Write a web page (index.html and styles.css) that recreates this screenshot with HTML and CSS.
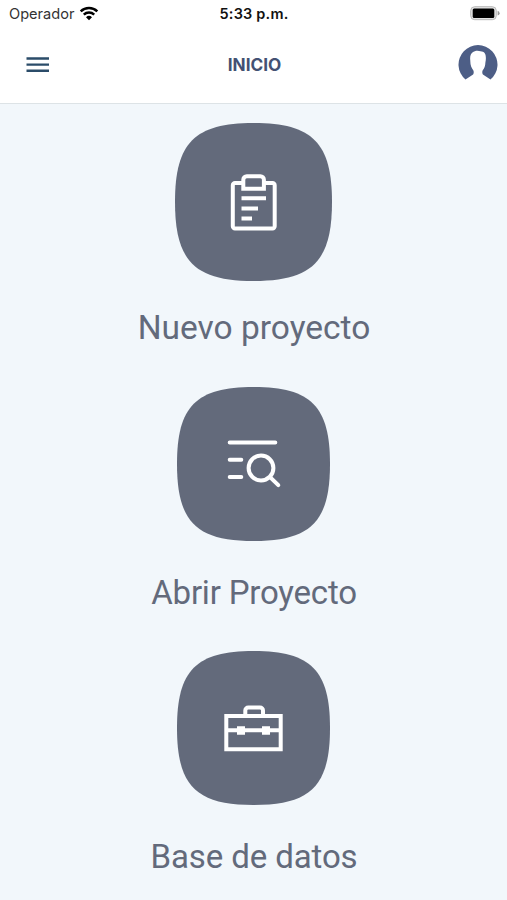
FILE: index.html
```html
<!DOCTYPE html>
<html lang="es">
<head>
  <meta charset="UTF-8">
  <meta name="viewport" content="width=device-width, initial-scale=1.0">
  <title>Inicio</title>
  <link rel="stylesheet" href="styles.css">
</head>
<body>
  <header>
    <div class="status-bar">
      <div class="carrier">
        <span class="carrier-name">Operador</span>
        <svg class="wifi" width="20" height="15" viewBox="0 0 20 15">
          <path d="M1.7 5.3a12 12 0 0 1 16.6 0M4.8 8.6a7.6 7.6 0 0 1 10.4 0" fill="none" stroke="#000" stroke-width="2.5"/>
          <path d="M7 11.2a4.4 4.4 0 0 1 6 0L10 14.3z"/>
        </svg>
      </div>
      <span class="time">5:33 p.m.</span>
      <svg class="battery" width="32" height="16" viewBox="0 0 32 16">
        <rect x="1.7" y="0.7" width="25.6" height="13" rx="4" fill="#e4e4e4" stroke="#b8b8b8" stroke-width="1"/>
        <rect x="3.7" y="2.6" width="21.6" height="9.4" rx="1.5"/>
        <path d="M28.6 4.8q2 .8 2 2.4t-2 2.4z" fill="#999"/>
      </svg>
    </div>
    <nav class="navbar">
      <svg class="menu" width="24" height="18" viewBox="0 0 24 18">
        <path d="M.5 2.5h22.5M.5 8.6h22.5M.5 14.7h22.5" stroke="#2b4c69" stroke-width="2.4"/>
      </svg>
      <h1>INICIO</h1>
      <svg class="avatar" width="40" height="36" viewBox="0 0 40 36">
        <path d="M7.5 34.5A19.5 19.5 0 1 1 32.5 34.5L24.9 29.6Q23.8 27.8 24.6 25.5C26.5 23 27.2 21 27.4 17.5C28.7 10.5 27.5 6.5 22.5 6.3C18 4.8 11 6.5 12.3 15.5C12.2 20 13.5 23 15.4 25.5Q16.2 27.8 15.1 29.6Z" fill="#4d5e86"/>
      </svg>
    </nav>
  </header>

  <main>
    <a class="option">
      <svg class="tile tile-big" viewBox="0 0 157 158">
        <path class="shape" d="M78.5 0C137.4 0 157 19.8 157 79S137.400 158 78.500 158S0 138.200 0 79S19.600 0 78.500 0Z"/>
        <g class="lines">
          <path d="M67.500 60H60a2.200 2.200 0 0 0-2.200 2.200V103.300a2.200 2.200 0 0 0 2.200 2.200H97.500a2.200 2.200 0 0 0 2.200-2.200V62.200a2.200 2.200 0 0 0-2.200-2.200H90"/>
          <path d="M68.300 65.800V56.700a3.500 3.500 0 0 1 3.500-3.500H85.400a3.500 3.500 0 0 1 3.500 3.500V65.800Z"/>
          <path d="M66.500 75.300H91M66.500 85.500H83M66.500 95.600H77"/>
        </g>
      </svg>
      <span class="label label-new">Nuevo proyecto</span>
    </a>

    <a class="option">
      <svg class="tile" viewBox="0 0 153 154">
        <path class="shape" d="M76.500 0C133.900 0 153 19.300 153 77S133.900 154 76.500 154S0 134.700 0 77S19.100 0 76.500 0Z"/>
        <g class="lines round">
          <path d="M52.700 55.500H98.300M52.700 72.700H64.300M52.700 89.900H64.300"/>
          <circle cx="84" cy="81" r="12.400"/>
          <path d="M93.300 90.300L101.300 98.200"/>
        </g>
      </svg>
      <span class="label label-open">Abrir Proyecto</span>
    </a>

    <a class="option">
      <svg class="tile" viewBox="0 0 153 154">
        <path class="shape" d="M76.500 0C133.900 0 153 19.300 153 77S133.900 154 76.500 154S0 134.700 0 77S19.100 0 76.500 0Z"/>
        <g class="lines">
          <path d="M49.300 64.900H103.700V98.200H49.300Z"/>
          <path d="M68.300 64V59.500a3 3 0 0 1 3-3H83a3 3 0 0 1 3 3V64"/>
          <path d="M49 79.300H104"/>
        </g>
        <path d="M60 75.200h8v8.600h-8zM85 75.200h8v8.600h-8z" fill="#fff"/>
      </svg>
      <span class="label label-data">Base de datos</span>
    </a>
  </main>
</body>
</html>
```
FILE: styles.css
```css
* {
  box-sizing: border-box;
}
body {
  margin: 0;
  height: 900px;
  overflow: hidden;
  background: #f2f7fb;
  font-family: Roboto, sans-serif;
}
header {
  height: 104px;
  background: #fff;
  border-bottom: 1px solid #dde3e6;
}
.status-bar {
  display: grid;
  grid-template-columns: 1fr auto 1fr;
  align-items: center;
  height: 27px;
  padding: 0 6px 0 9px;
  font-family: Inter, sans-serif;
  color: #111;
}
.carrier {
  display: flex;
  align-items: center;
  gap: 5px;
}
.carrier-name {
  font-size: 14.6px;
  color: #333;
}
.wifi {
  margin-top: -1px;
}
.time {
  margin-right: 2px;
  font-size: 14.5px;
  font-weight: 600;
  letter-spacing: 0.2px;
}
.battery {
  justify-self: end;
}
.navbar {
  display: grid;
  grid-template-columns: 1fr auto 1fr;
  align-items: center;
  height: 75px;
  padding: 0 9px 0 26px;
}
h1 {
  margin: 0 15px 0 0;
  font-family: Inter, sans-serif;
  font-size: 17.2px;
  font-weight: 650;
  color: #435173;
}
.avatar {
  justify-self: end;
  margin-bottom: 4px;
}
main {
  padding-top: 19px;
}
.option {
  display: flex;
  flex-direction: column;
  align-items: center;
  height: 264px;
}
.tile {
  width: 153px;
  height: 154px;
  flex: none;
}
.tile-big {
  width: 157px;
  height: 158px;
}
.shape {
  fill: #636a7b;
}
.lines {
  fill: none;
  stroke: #fff;
  stroke-width: 4;
}
.round {
  stroke-linecap: round;
}
.label {
  margin: 32px 0 0 1px;
  font-size: 33px;
  line-height: 40px;
  white-space: nowrap;
  color: #636a7b;
}
.label-new {
  margin-top: 27px;
  font-size: 33.5px;
}
.label-open {
  letter-spacing: -0.2px;
}
.label-data {
  letter-spacing: -0.1px;
}
```
